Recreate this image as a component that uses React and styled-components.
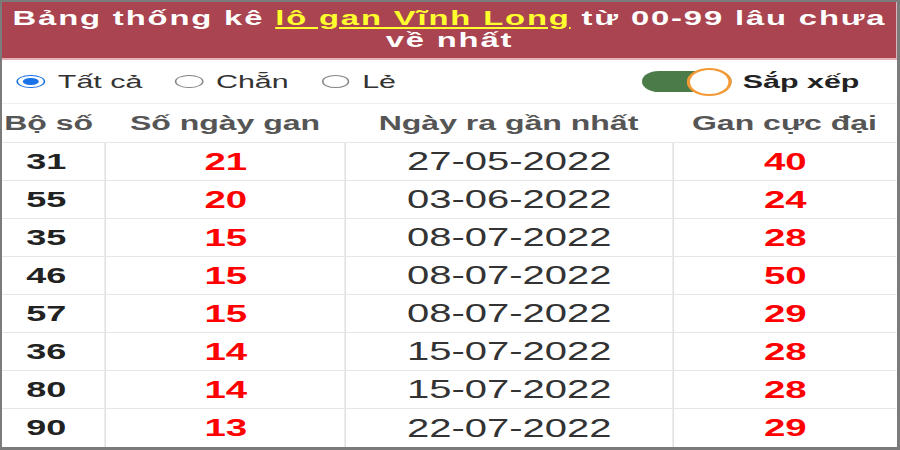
import * as React from 'react';
import styled, { createGlobalStyle } from 'styled-components';

const SCALE = 1.6;

const GlobalStyle = createGlobalStyle`
  body {
    margin: 0;
    background: #fff;
    font-family: "Liberation Sans", Arial, sans-serif;
  }
`;

const Frame = styled.div`
  width: 900px;
  height: 450px;
  box-sizing: border-box;
  border-style: solid;
  border-color: #7b7b7b;
  border-width: 2px 3px 3px 2px;
  overflow: hidden;
  background: #fff;
`;

const Stage = styled.div`
  width: ${895 / SCALE}px;
  transform: scaleX(${SCALE});
  transform-origin: left top;
`;

const Title = styled.h1`
  margin: 0;
  height: 58px;
  box-sizing: border-box;
  padding-top: 5px;
  background: #a94450;
  border-bottom: 2px solid #e6b1b6;
  color: #fff;
  font-size: 20.5px;
  letter-spacing: 1.15px;
  line-height: 22px;
  font-weight: bold;
  text-align: center;
  white-space: nowrap;
`;

const TitleLink = styled.a`
  color: #ffff2e;
  text-decoration: underline;
  text-underline-offset: 2px;
`;

const FilterBar = styled.div`
  height: 44px;
  box-sizing: border-box;
  display: flex;
  align-items: center;
  padding-left: 9.4px;
  border-bottom: 1px solid #efefef;
`;

const RadioLabel = styled.label`
  display: flex;
  align-items: center;
  gap: 8px;
  margin-right: 20.5px;
  font-size: 19px;
  color: #333;
`;

const RadioDot = styled.span`
  width: 17.5px;
  height: 13px;
  box-sizing: border-box;
  border-radius: 50%;
  border: 1.5px solid ${(p) => (p.$on ? '#1a73e8' : '#858585')};
  display: flex;
  align-items: center;
  justify-content: center;

  &::after {
    content: '';
    display: ${(p) => (p.$on ? 'block' : 'none')};
    width: 10px;
    height: 7.5px;
    border-radius: 50%;
    background: #1a73e8;
  }
`;

const Sorter = styled.div`
  margin-left: auto;
  margin-right: 23.5px;
  display: flex;
  align-items: center;
  gap: 7.5px;
  font-size: 19px;
  font-weight: bold;
  color: #222;
`;

const Track = styled.span`
  position: relative;
  width: 56px;
  height: 21px;
  border-radius: 11px;
  background: #4c7b4a;
`;

const Knob = styled.span`
  position: absolute;
  right: 0;
  top: -3.5px;
  width: 28px;
  height: 28px;
  box-sizing: border-box;
  border-radius: 50%;
  background: #fff;
  border: 2px solid #f39a36;
`;

const Grid = styled.div`
  display: grid;
  grid-template-columns: ${103 / SCALE}px ${240 / SCALE}px ${327 / SCALE}px 1fr;
`;

const HeadCell = styled.div`
  height: 39px;
  box-sizing: border-box;
  display: flex;
  align-items: center;
  justify-content: center;
  padding-right: ${(p) => (p.$first ? '6px' : '0')};
  border-bottom: 1px solid #e6e6e6;
  font-size: 20px;
  font-weight: bold;
  color: #555;
  white-space: nowrap;
`;

const Cell = styled.div`
  height: 38px;
  box-sizing: border-box;
  display: flex;
  align-items: center;
  justify-content: center;
  padding-right: ${(p) => (p.$first ? '9px' : '0')};
  border-bottom: ${(p) => (p.$last ? 'none' : '1px solid #e6e6e6')};
  border-left: ${(p) => (p.$first ? 'none' : '1px solid #e2e2e2')};
  font-size: ${(p) => (p.$kind === 'date' ? '25px' : p.$kind === 'num' ? '22.5px' : '24px')};
  font-weight: ${(p) => (p.$kind === 'date' ? 'normal' : 'bold')};
  color: ${(p) => (p.$kind === 'red' ? '#ff0000' : p.$kind === 'date' ? '#333' : '#222')};
`;

const rows = [
  ['31', '21', '27-05-2022', '40'],
  ['55', '20', '03-06-2022', '24'],
  ['35', '15', '08-07-2022', '28'],
  ['46', '15', '08-07-2022', '50'],
  ['57', '15', '08-07-2022', '29'],
  ['36', '14', '15-07-2022', '28'],
  ['80', '14', '15-07-2022', '28'],
  ['90', '13', '22-07-2022', '29'],
];

const kinds = ['num', 'red', 'date', 'red'];

export default function App() {
  return (
    <Frame>
      <GlobalStyle />
      <Stage>
        <Title>
          Bảng thống kê <TitleLink>lô gan Vĩnh Long</TitleLink> từ 00-99 lâu chưa
          <br />
          về nhất
        </Title>
        <FilterBar>
          <RadioLabel>
            <RadioDot $on />
            Tất cả
          </RadioLabel>
          <RadioLabel>
            <RadioDot />
            Chẵn
          </RadioLabel>
          <RadioLabel>
            <RadioDot />
            Lẻ
          </RadioLabel>
          <Sorter>
            <Track>
              <Knob />
            </Track>
            Sắp xếp
          </Sorter>
        </FilterBar>
        <Grid>
          <HeadCell $first>Bộ số</HeadCell>
          <HeadCell>Số ngày gan</HeadCell>
          <HeadCell>Ngày ra gần nhất</HeadCell>
          <HeadCell>Gan cực đại</HeadCell>
          {rows.map((row, i) =>
            row.map((v, j) => (
              <Cell
                key={`${i}-${j}`}
                $first={j === 0}
                $last={i === rows.length - 1}
                $kind={kinds[j]}
              >
                {v}
              </Cell>
            ))
          )}
        </Grid>
      </Stage>
    </Frame>
  );
}
